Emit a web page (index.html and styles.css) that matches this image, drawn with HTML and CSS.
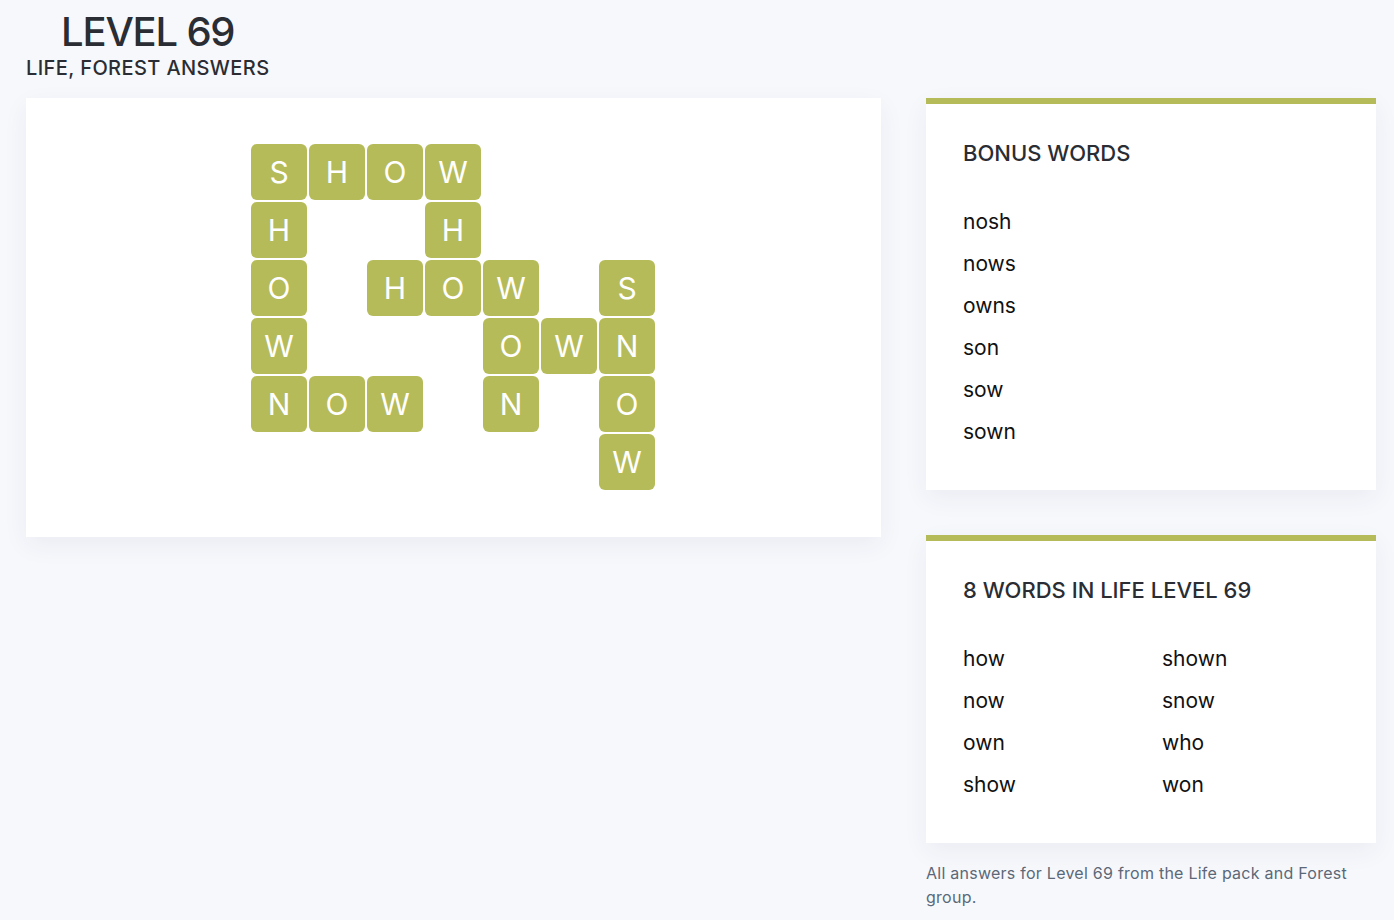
FILE: index.html
```html
<!DOCTYPE html>
<html lang="en">
<head>
<meta charset="utf-8">
<title>Level 69 - Life, Forest Answers</title>
<link rel="stylesheet" href="styles.css">
</head>
<body>
<header class="page-header">
  <h1 class="title">LEVEL 69</h1>
  <p class="subtitle">LIFE, FOREST ANSWERS</p>
</header>
<main class="layout">
  <section class="board-card">
    <div class="board">
      <div class="tile" style="grid-area:1/1">S</div>
      <div class="tile" style="grid-area:1/2">H</div>
      <div class="tile" style="grid-area:1/3">O</div>
      <div class="tile" style="grid-area:1/4">W</div>
      <div class="tile" style="grid-area:2/1">H</div>
      <div class="tile" style="grid-area:2/4">H</div>
      <div class="tile" style="grid-area:3/1">O</div>
      <div class="tile" style="grid-area:3/3">H</div>
      <div class="tile" style="grid-area:3/4">O</div>
      <div class="tile" style="grid-area:3/5">W</div>
      <div class="tile" style="grid-area:3/7">S</div>
      <div class="tile" style="grid-area:4/1">W</div>
      <div class="tile" style="grid-area:4/5">O</div>
      <div class="tile" style="grid-area:4/6">W</div>
      <div class="tile" style="grid-area:4/7">N</div>
      <div class="tile" style="grid-area:5/1">N</div>
      <div class="tile" style="grid-area:5/2">O</div>
      <div class="tile" style="grid-area:5/3">W</div>
      <div class="tile" style="grid-area:5/5">N</div>
      <div class="tile" style="grid-area:5/7">O</div>
      <div class="tile" style="grid-area:6/7">W</div>
    </div>
  </section>
  <aside class="sidebar">
    <section class="panel">
      <h2 class="panel-title">BONUS WORDS</h2>
      <ul class="word-list">
        <li>nosh</li>
        <li>nows</li>
        <li>owns</li>
        <li>son</li>
        <li>sow</li>
        <li>sown</li>
      </ul>
    </section>
    <section class="panel">
      <h2 class="panel-title">8 WORDS IN LIFE LEVEL 69</h2>
      <ul class="word-list two-col">
        <li>how</li>
        <li>shown</li>
        <li>now</li>
        <li>snow</li>
        <li>own</li>
        <li>who</li>
        <li>show</li>
        <li>won</li>
      </ul>
    </section>
    <p class="note">All answers for Level 69 from the Life pack and Forest group.</p>
  </aside>
</main>
</body>
</html>
```
FILE: styles.css
```css
* { box-sizing: border-box; }
html, body { margin: 0; padding: 0; }
body {
  background: #f7f8fc;
  font-family: Inter, "Noto Sans", "Liberation Sans", sans-serif;
  color: #2a2d33;
}
.page-header {
  display: inline-flex;
  flex-direction: column;
  align-items: center;
  padding: 8px 0 0 26px;
}
.title {
  margin: 0;
  font-size: 40px;
  line-height: 48px;
  font-weight: 500;
  letter-spacing: -1.2px;
  color: #2a2d33;
}
.subtitle {
  margin: 0;
  font-size: 20px;
  line-height: 24px;
  font-weight: 500;
  letter-spacing: 0.4px;
  color: #2a2d33;
}
.layout {
  display: grid;
  grid-template-columns: 855px 450px;
  column-gap: 45px;
  align-items: start;
  padding: 18px 18px 0 26px;
}
.board-card {
  background: #fff;
  display: flex;
  justify-content: center;
  padding: 46px 1px 47px 0;
  box-shadow: 0 8px 24px rgba(30, 50, 90, 0.06);
}
.board {
  display: grid;
  grid-template-columns: repeat(7, 56px);
  grid-template-rows: repeat(6, 56px);
  gap: 2px;
}
.tile {
  background: #b5bb58;
  border-radius: 6px;
  color: #fff;
  font-size: 30px;
  display: flex;
  align-items: center;
  justify-content: center;
  font-weight: 400;
}
.sidebar {
  display: flex;
  flex-direction: column;
}
.panel {
  background: #fff;
  border-top: 6px solid #b5bb58;
  padding: 37px 37px 37px;
  box-shadow: 0 8px 24px rgba(30, 50, 90, 0.06);
}
.panel + .panel { margin-top: 45px; }
.panel-title {
  margin: 0 0 36px;
  font-size: 22px;
  line-height: 24px;
  font-weight: 500;
  color: #2a2d33;
}
.word-list {
  list-style: none;
  margin: 0;
  padding: 0;
  font-size: 21px;
  line-height: 42px;
  color: #111;
}
.two-col {
  display: grid;
  grid-template-columns: 199px 1fr;
}
.note {
  margin: 18px 0 0;
  font-size: 16px;
  line-height: 24px;
  letter-spacing: 0.25px;
  color: #5b6878;
}
```
